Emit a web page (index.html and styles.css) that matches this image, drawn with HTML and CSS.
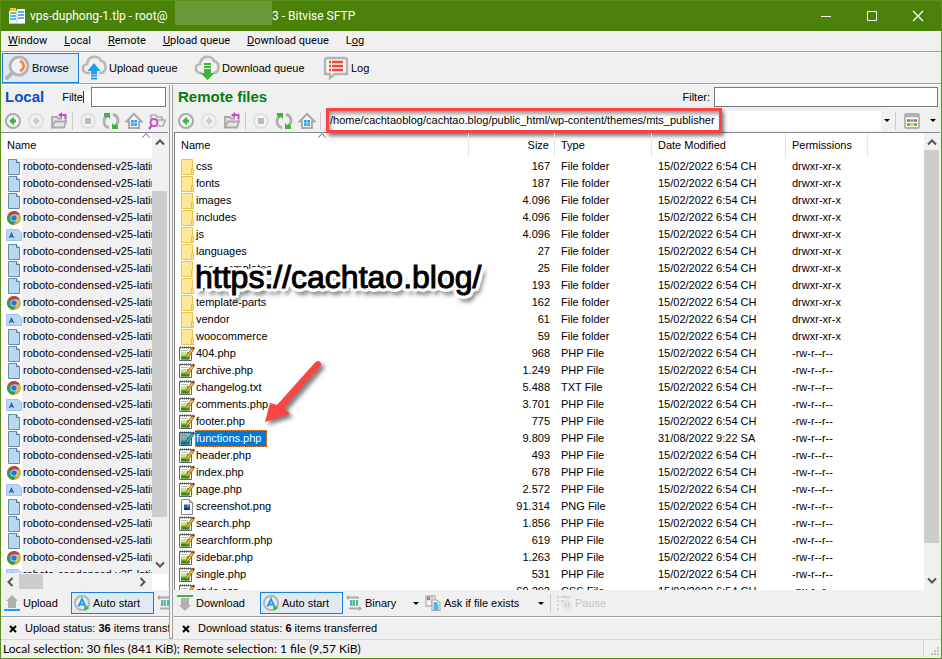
FILE: index.html
```
<!DOCTYPE html>
<html lang="en">
<head>
<meta charset="utf-8">
<title>Bitvise SFTP</title>
<link rel="stylesheet" href="styles.css">
</head>
<body>
<svg class="sprite" aria-hidden="true">
  <symbol id="i-file" viewBox="0 0 16 16"><path d="M2.500.5h8l3 3v12h-11z" fill="#b9d9f3" stroke="#6b8aa6"/><path d="M10.500.5v3h3" fill="#e4f1fb" stroke="#55728c"/></symbol>
  <symbol id="i-chrome" viewBox="0 0 16 16"><circle cx="8" cy="8" r="7" fill="#d8b63c"/><path d="M8 8 1.900 4.500A7 7 0 0 1 14.100 4.500H8z" fill="#b8444c"/><path d="M8 8 1.900 4.500A7 7 0 0 0 7.500 15L11 9.700z" fill="#2f9a5c"/><circle cx="8" cy="8" r="3.600" fill="#dfeaf5"/><circle cx="8" cy="8" r="2.800" fill="#2378dc"/></symbol>
  <symbol id="i-font" viewBox="0 0 16 16"><path d="M.5 2.500h12l3 3v8H.5z" fill="#b9d9f3" stroke="#a3c5e2"/><path d="M3.500 11 5.500 6.500 7.500 11M4.500 9.500h2" fill="none" stroke="#2b55b0" stroke-width="1.200"/></symbol>
  <symbol id="i-folder" viewBox="0 0 16 16"><path d="M2.500.5h11v15h-11z" fill="#ffe796" stroke="#e8c252"/><path d="M12.500 9.500h2v6h-2z" fill="#ffdf80" stroke="#e8c252"/></symbol>
  <symbol id="i-note" viewBox="0 0 16 16"><path d="M.5 1.500h12v13H.5z" fill="#fff" stroke="#666"/><path d="M1 1.500h11" stroke="#555" stroke-width="2" stroke-dasharray="1 1"/><path d="M2 4.500h7" stroke="#bbb"/><path d="M2 6h8.500v7.500H2z" fill="#63b52c"/><path d="M2 11h8.500v2.500H2z" fill="#2f8d20"/><path d="M2 6h6v3.500H2z" fill="#c3e88e"/><path d="M6.500 13 7.500 9.500 13 2l2 1.500L9.500 11z" fill="#f5b52e" stroke="#7a4b14" stroke-width=".7"/><path d="m13 2 1-1.500L16 2l-1 1.500z" fill="#8b1d1d"/></symbol>
  <symbol id="i-img" viewBox="0 0 16 16"><path d="M2.500.5h8l3 3v12h-11z" fill="#fff" stroke="#888"/><path d="M10.500.5v3h3" fill="none" stroke="#888"/><path d="M5 5.500h6v5.500H5z" fill="#1f62b8"/><path d="m5 11 2-3 2 2 1-1 1 2z" fill="#0b3270"/><path d="M8 6.500h2v1H8z" fill="#9fd0ff"/></symbol>
  <symbol id="i-back" viewBox="0 0 18 18"><circle cx="9" cy="9" r="7" fill="#f5f5f5" stroke="#aaa" stroke-width="2"/><path d="M5 9l5-4.500v3h2v3h-2v3z" fill="#3fb63a"/></symbol>
  <symbol id="i-fwd" viewBox="0 0 18 18"><circle cx="9" cy="9" r="7" fill="#f3f3f3" stroke="#e0e0e0" stroke-width="2"/><path d="M13 9 8 4.500v3H6v3h2v3z" fill="#cbcbcb"/></symbol>
  <symbol id="i-open" viewBox="0 0 18 18"><path d="M2 15.500V5h5l1 1.500h4M15.500 8v2M2 15.500h12l2-6H5z" fill="#e4e4e4" stroke="#aaa" stroke-width="1.800"/><path d="M15.500 7.500V3H11" fill="none" stroke="#c84bc8" stroke-width="2"/><path d="M12 0v6L8 3z" fill="#c84bc8"/></symbol>
  <symbol id="i-stop" viewBox="0 0 18 18"><circle cx="9" cy="9" r="7" fill="#f3f3f3" stroke="#e0e0e0" stroke-width="2"/><path d="M6 6h6v6H6z" fill="#bcbcbc"/></symbol>
  <symbol id="i-refresh" viewBox="0 0 18 18"><path d="M11 2.500c6 1 6 8 3 11M7 15.500c-6-1-6-8-3-11" fill="none" stroke="#b0b0b0" stroke-width="2.800"/><path d="M2 1h6v6L6 5 4 6 2 4zM16 17h-6v-6l2 2 2-1 2 2z" fill="#3fb63a"/></symbol>
  <symbol id="i-home" viewBox="0 0 18 18"><path d="M1.500 9.500 9 2l7.500 7.500H14V16H4V9.500z" fill="#f5f5f5" stroke="#aaa" stroke-width="2"/><path d="M6 8h6v6H6z" fill="#2aa4ef"/><path d="M9 8v6M6 11h6" stroke="#9ad8fb"/></symbol>
  <symbol id="i-find" viewBox="0 0 18 18"><path d="M3 8V3h5l1 2h5v3M9 14h6l2.500-6H8" fill="#eee" stroke="#b0b0b0" stroke-width="1.700"/><circle cx="6" cy="10.500" r="3.500" fill="#f3e6f3" stroke="#c84bc8" stroke-width="1.900"/><path d="m4 13-3 4" stroke="#c84bc8" stroke-width="2.200"/></symbol>
  <symbol id="i-auto" viewBox="0 0 16 16"><circle cx="8" cy="8" r="7" fill="#e8edf2" stroke="#b4b4b4" stroke-width="2"/><path d="M4.500 11.500 8 4l3.500 7.500M6 9.500h4" fill="none" stroke="#1d9cf0" stroke-width="1.800"/><path d="m10.500 10 5 3-5 3z" fill="#3fb63a"/></symbol>
  <symbol id="i-bin" viewBox="0 0 16 16"><path d="M1 2.500h12M3 13.500h12" stroke="#aaa" stroke-width="2"/><path d="M0 2.500 3 0v5zM16 13.500 13 11v5z" fill="#aaa"/><path d="M4 6h8M4 8h8M4 10h8" stroke="#1fa3d8" stroke-width="1.500" stroke-dasharray="2 1"/><path d="M6 5v6M11 5v6" stroke="#57bd45"/></symbol>
  <symbol id="i-ask" viewBox="0 0 16 16"><path d="M1 1h6v10H1zM7 1h3v4" fill="#f4f4f4" stroke="#b4b4b4" stroke-width="1.300"/><path d="m2 2 3 3m0-3L2 5" stroke="#e8503e" stroke-width="1.500"/><path d="M7 5h5l3 3v7.500H7z" fill="#fff" stroke="#aaa" stroke-width="1.200"/><path d="M8.500 8h4M8.500 10h5M8.500 12h5M8.500 14h5" stroke="#209de8" stroke-width="1.300"/></symbol>
  <symbol id="i-pause" viewBox="0 0 16 16"><path d="M1 2h2M1 6h2M1 10h2M1 14h2M5 2h9M5 6h3" stroke="#d3d3d3" stroke-width="2"/><circle cx="11" cy="10" r="5" fill="#eee" stroke="#ddd"/><path d="M9.500 7.500v5M12.500 7.500v5" stroke="#c8c8c8" stroke-width="1.600"/></symbol>
  <symbol id="i-up" viewBox="0 0 16 16"><path d="M8 0l6 6h-2v7H4V6H2z" fill="#b0b0b0"/><path d="M0 15h16" stroke="#1b9ff0" stroke-width="2"/></symbol>
  <symbol id="i-down" viewBox="0 0 16 16"><path d="M8 16l6-6h-2V3H4v7H2z" fill="#b0b0b0"/><path d="M0 1h16" stroke="#3fb63a" stroke-width="2"/></symbol>
  <symbol id="i-x" viewBox="0 0 8 8"><path d="m1 1 6 6M7 1 1 7" stroke="#000" stroke-width="2"/></symbol>
  <symbol id="i-chev" viewBox="0 0 10 10"><path d="M1 7.500 5 3.500l4 4" fill="none" stroke="#555" stroke-width="2"/></symbol>
  <symbol id="i-sort" viewBox="0 0 8 5"><path d="m.5 4.500 3.500-4 3.500 4" fill="none" stroke="#666"/></symbol>
</svg>

<div class="window">
  <header class="titlebar">
    <svg class="app-icon" viewBox="0 0 16 16"><path d="M1 0h6v3H1z" fill="#f7c331"/><path d="M0 3h8v12H0zM8 1h8v14H8z" fill="#fff"/><path d="M1 5h6M1 8h6M1 11h6" stroke="#299bdc" stroke-width="1.500"/><path d="M9 4h6M9 7h6M9 10h6" stroke="#299bdc" stroke-width="1.500"/><path d="M0 15.500h16M8 2v13" stroke="#b8c2c8"/></svg>
    <span class="title-start">vps-duphong-1.tlp - root@</span><span class="redacted"></span><span>3 - Bitvise SFTP</span>
    <div class="win-buttons">
      <button aria-label="Minimize"><svg viewBox="0 0 12 12"><path d="M1 6.500h10" stroke="#fff"/></svg></button>
      <button aria-label="Maximize"><svg viewBox="0 0 12 12"><path d="M1.500 1.500h9v9h-9z" fill="none" stroke="#fff"/></svg></button>
      <button aria-label="Close"><svg viewBox="0 0 12 12"><path d="m1 1 10 10M11 1 1 11" stroke="#fff" stroke-width="1.200"/></svg></button>
    </div>
  </header>
  <nav class="menubar">
    <button><u>W</u>indow</button><button><u>L</u>ocal</button><button><u>R</u>emote</button><button><u>U</u>pload queue</button><button><u>D</u>ownload queue</button><button>L<u>o</u>g</button>
  </nav>
  <div class="main-toolbar">
    <button class="tool tool-browse active"><svg viewBox="0 0 26 26"><path d="m10 16-7 7" stroke="#b4b4b4" stroke-width="4" stroke-linecap="round"/><circle cx="15" cy="11" r="9" fill="#eef1f5" stroke="#b4b4b4" stroke-width="3"/><path d="M16 6c5 2 5 8 0 10" fill="none" stroke="#f5842b" stroke-width="2.500"/></svg>Browse</button>
    <button class="tool tool-upload"><svg viewBox="0 0 26 26"><path d="M9 18H6c-5-1-6-8 0-9 1-9 12-9 14-3 6 1 6 11 0 12h-2" fill="none" stroke="#b8b8b8" stroke-width="2.600"/><path d="m13 8 6.500 8H16v3h-6v-3H6.500z" fill="#1d9ff2"/><path d="M10 20.500h6M10 23.500h6" stroke="#1d9ff2" stroke-width="1.800"/></svg>Upload queue</button>
    <button class="tool tool-download"><svg viewBox="0 0 26 26"><path d="M8 18H6c-5-1-6-8 0-9 1-9 12-9 14-3 6 1 6 11 0 12h-1" fill="none" stroke="#b8b8b8" stroke-width="2.600"/><path d="M10 9h7M10 12h7" stroke="#3fb63a" stroke-width="1.800"/><path d="M10 14h7v4h3.500l-7 7-7-7H10z" fill="#3fb63a"/></svg>Download queue</button>
    <button class="tool"><svg viewBox="0 0 26 26"><path d="M4 3h18q2 0 2 2v14H12l-5 4v-4H2V5q0-2 2-2z" fill="#f6f6f6" stroke="#b4b4b4" stroke-width="2.400"/><path d="M6 7h2M6 11h2M6 15h2M9 7h11M9 11h11M9 15h11" stroke="#e84a3c" stroke-width="2.400"/></svg>Log</button>
  </div>

  <main class="panes">
    <section class="pane local">
      <div class="filter-row">
        <h2>Local</h2><label for="lf">Filte</label><span class="patch"></span><input id="lf" type="text">
      </div>
      <div class="nav-row">
        <button aria-label="Back"><svg><use href="#i-back"/></svg></button><button aria-label="Forward"><svg><use href="#i-fwd"/></svg></button><button aria-label="Parent folder"><svg><use href="#i-open"/></svg></button><i class="sep"></i><button aria-label="Stop"><svg><use href="#i-stop"/></svg></button><button aria-label="Refresh"><svg><use href="#i-refresh"/></svg></button><button aria-label="Home"><svg><use href="#i-home"/></svg></button><button aria-label="Find"><svg><use href="#i-find"/></svg></button>
      </div>
      <div class="listbox">
        <div class="list-main">
          <div class="list-clip">
            <table><thead><tr><th>Name<svg class="sort"><use href="#i-sort"/></svg></th></tr></thead><tbody id="local-rows"></tbody></table>
          </div>
          <div class="hscroll"><svg class="left"><use href="#i-chev"/></svg><i class="hthumb"></i><svg class="right"><use href="#i-chev"/></svg></div>
        </div>
        <div class="vscroll"><svg><use href="#i-chev"/></svg><div class="track"><i class="thumb"></i></div><svg class="flip"><use href="#i-chev"/></svg></div>
      </div>
      <div class="action-row">
        <button class="act act-transfer"><svg><use href="#i-up"/></svg>Upload</button><button class="act act-auto active"><svg><use href="#i-auto"/></svg>Auto start</button><button class="act act-binary" aria-label="Binary"><svg><use href="#i-bin"/></svg></button>
      </div>
      <div class="transfer-row"><svg><use href="#i-x"/></svg><span>Upload status: <b>36</b> items transferred</span></div>
    </section>
    <div class="splitter"></div>
    <section class="pane remote">
      <div class="filter-row">
        <h2>Remote files</h2><label for="rf">Filter:</label><input id="rf" type="text">
      </div>
      <div class="nav-row">
        <button aria-label="Back"><svg><use href="#i-back"/></svg></button><button aria-label="Forward"><svg><use href="#i-fwd"/></svg></button><button aria-label="Parent folder"><svg><use href="#i-open"/></svg></button><i class="sep"></i><button aria-label="Stop"><svg><use href="#i-stop"/></svg></button><button aria-label="Refresh"><svg><use href="#i-refresh"/></svg></button><button aria-label="Home"><svg><use href="#i-home"/></svg></button><i class="sep"></i>
        <div class="address"><input type="text" aria-label="Remote path" value="/home/cachtaoblog/cachtao.blog/public_html/wp-content/themes/mts_publisher"><button class="drop" aria-label="Path history"><i class="caret"></i></button><span class="mark-box"></span></div>
        <i class="sep"></i>
        <button class="view" aria-label="View"><svg viewBox="0 0 18 18"><rect x="2" y="2" width="14" height="14" rx="1" fill="#fafafa" stroke="#b0b0b0" stroke-width="1.800"/><path d="M2 4h14" stroke="#b0b0b0" stroke-width="2.500"/><g stroke-width="2.500"><path d="M4 8.500h3" stroke="#e84a3c"/><path d="M7.500 8.500h3" stroke="#209de8"/><path d="M11 8.500h3" stroke="#e84a3c"/><path d="M4 12.500h3" stroke="#3fb63a"/><path d="M7.500 12.500h3" stroke="#f2b21d"/><path d="M11 12.500h3" stroke="#3fb63a"/></g></svg></button><button class="view-drop" aria-label="View options"><i class="caret"></i></button>
      </div>
      <div class="listbox">
        <div class="list-main"><div class="list-clip">
          <table>
            <colgroup><col class="c-name"><col class="c-size"><col class="c-type"><col class="c-date"><col class="c-perm"><col></colgroup>
            <thead><tr><th>Name<svg class="sort"><use href="#i-sort"/></svg></th><th class="num">Size</th><th>Type</th><th>Date Modified</th><th>Permissions</th><th></th></tr></thead>
            <tbody id="remote-rows"></tbody>
          </table>
          <svg class="arrow" viewBox="0 0 64 74"><path d="M53.500 5 Q58 2 59.500 8 L22 51 L28 57 L3 65 L8 46 L15 48z" fill="#fa4545"/></svg>
          <div class="watermark">https://cachtao.blog/</div>
        </div></div>
        <div class="vscroll"><svg><use href="#i-chev"/></svg><div class="track"><i class="thumb"></i></div><svg class="flip"><use href="#i-chev"/></svg></div>
      </div>
      <div class="action-row">
        <button class="act act-transfer"><svg><use href="#i-down"/></svg>Download</button><button class="act act-auto active"><svg><use href="#i-auto"/></svg>Auto start</button><button class="act act-binary"><svg><use href="#i-bin"/></svg>Binary<i class="caret"></i></button><button class="act act-ask"><svg><use href="#i-ask"/></svg>Ask if file exists<i class="caret"></i></button><i class="sep"></i><button class="act" disabled><svg><use href="#i-pause"/></svg>Pause</button>
      </div>
      <div class="transfer-row"><svg><use href="#i-x"/></svg><span>Download status: <b>6</b> items transferred</span></div>
    </section>
  </main>
  <footer class="statusbar"><span>Local selection: 30 files (841 KiB); Remote selection: 1 file (9,57 KiB)</span>
    <svg class="grip" viewBox="0 0 12 12"><path d="M8 1h2v2H8zM5 4h2v2H5zM8 4h2v2H8zM2 7h2v2H2zM5 7h2v2H5zM8 7h2v2H8z" fill="#bfbfbf"/></svg></footer>
</div>
<script src="app.js"></script>
</body>
</html>
```
FILE: styles.css
```
* { box-sizing: border-box; }
body { margin: 0; font: 11px/17px "Liberation Sans", Arial, sans-serif; color: #000; background: #f0f0f0; }
button { font: inherit; color: inherit; background: none; border: 0; padding: 0; margin: 0; white-space: nowrap; text-align: left; }
input { font: inherit; border: 1px solid #7a7a7a; background: #fff; padding: 0 2px; min-width: 0; border-radius: 0; }
svg { display: block; flex: none; }
.sprite { position: absolute; width: 0; height: 0; }
.window { height: 100vh; min-height: 400px; display: flex; flex-direction: column; border: 1px solid #5a9018; overflow: hidden; }

.titlebar { display: flex; align-items: center; flex: none; height: 30px; padding-left: 8px; background: #4a8209; color: #fff; font: 12px/18px Roboto, sans-serif; white-space: pre; }
.app-icon { width: 16px; height: 16px; margin-right: 5px; }
.title-start { width: 145px; }
.redacted { width: 97px; height: 24px; background: #699a38; align-self: flex-start; }
.win-buttons { display: flex; margin-left: auto; }
.win-buttons button { width: 46px; height: 28px; display: grid; place-items: center; }
.win-buttons svg { width: 12px; height: 12px; }

.menubar { display: flex; align-items: center; flex: none; height: 21px; gap: 17px; padding-left: 7px; border-bottom: 1px solid #a0a0a0; font: 11px/18px Roboto, sans-serif; }
.main-toolbar { display: flex; flex: none; height: 32px; border-top: 1px solid #fff; border-bottom: 1px solid #a0a0a0; padding-left: 1px; }
.tool { display: flex; align-items: center; gap: 2px; padding: 0 1px; border: 1px solid transparent; }
.tool svg { width: 26px; height: 26px; }
.active { background: #e1e9f2; border: 1px solid #1a7fdc; }
.tool-browse { width: 77px; }
.tool-upload { width: 113px; }
.tool-download { width: 129px; }

.panes { flex: 1; min-height: 0; display: flex; border-top: 1px solid #fff; }
.pane { display: flex; flex-direction: column; min-width: 0; overflow: hidden; }
.local { width: 168px; flex: none; }
.remote { flex: 1; }
.splitter { flex: none; width: 4px; margin-right: 1px; border: 1px solid #a0a0a0; border-top: 0; background: #f4f4f4; }
.filter-row { display: flex; align-items: center; flex: none; height: 24px; padding: 0 3px 0 4px; }
.filter-row h2 { margin: 0; font: bold 15px/20px "Liberation Sans", Arial, sans-serif; color: #0a4ec8; }
.remote .filter-row h2 { color: #077a14; flex: 1; }
.filter-row input { height: 20px; }
.local label { margin-left: 18px; }
.local .filter-row input { flex: 1; }
.patch { width: 8px; height: 12px; border-left: 1px solid #333; background: #fff; }
.remote .filter-row input { width: 224px; margin-left: 4px; }

.nav-row { display: flex; align-items: center; flex: none; height: 23px; }
.nav-row > button { width: 23px; height: 22px; display: grid; place-items: center; flex: none; }
.nav-row svg { width: 18px; height: 18px; }
.sep { flex: none; width: 1px; height: 18px; margin: 0 3px 0 2px; background: #cfc8c8; }
.address { flex: 1; display: flex; height: 20px; margin-left: 2px; background: #fff; position: relative; }
.address input { flex: 1; border: 0; background: none; padding: 0 2px 0 4px; }
.drop { width: 12px; display: grid; place-items: center; background: #f0f0f0; }
.mark-box { position: absolute; left: 0; top: -3px; width: 396px; height: 25px; border: 3px solid #fa4545; box-shadow: 2px 3px 4px #0008, inset 2px 3px 4px #0006; pointer-events: none; }
.caret { display: block; width: 0; height: 0; border: 3px solid transparent; border-top-color: #000; border-bottom: 0; }
.nav-row .view { width: 26px; }
.nav-row .view-drop { width: 16px; }

.listbox { flex: 1; min-height: 0; display: flex; border-top: 1px solid #828790; background: #fff; }
.remote .listbox { border-left: 1px solid #828790; margin-right: 1px; }
.local .listbox { margin-right: 1px; }
.list-main { flex: 1; min-width: 0; display: flex; flex-direction: column; }
.list-clip { flex: 1; min-height: 0; overflow: hidden; position: relative; }
table { width: 100%; border-collapse: separate; border-spacing: 0; table-layout: fixed; }
th { height: 25px; padding: 0 6px; font-weight: normal; text-align: left; border-right: 1px solid #e5e5e5; position: relative; }
th:last-child { border-right: 0; }
td { height: 17px; padding: 0 6px; white-space: nowrap; overflow: hidden; }
.sort { position: absolute; top: 0; left: 50%; width: 8px; height: 5px; margin-left: -4px; }
.local .sort { left: auto; right: 2px; }
.num { text-align: right; padding-right: 5px; }
.c-name { width: 294px; }
.c-size { width: 86px; }
.c-type { width: 97px; }
.c-date { width: 134px; }
.c-perm { width: 82px; }
td:first-child { padding: 0 0 0 4px; }
.entry { display: flex; align-items: center; height: 17px; }
.entry svg { width: 16px; height: 16px; }
.entry span { padding: 0 6px 0 1px; }
.local .entry span { flex: 1; background: #f0f0f0; }
.local td:first-child { padding-left: 5px; }
.selected span { background: #0078d7; color: #fff; outline: 1px dotted #e88b3a; outline-offset: -1px; height: 17px; }
.selected svg { filter: sepia(1) hue-rotate(150deg) saturate(3) brightness(0.7); }

.vscroll { flex: none; width: 16px; background: #f0f0f0; display: flex; flex-direction: column; align-items: center; padding: 4px 0; }
.local .vscroll { margin-bottom: 16px; }
.vscroll svg { width: 10px; height: 10px; }
.flip { transform: rotate(180deg); }
.track { flex: 1; align-self: stretch; display: flex; flex-direction: column; padding: 3px 1px 3px 0; }
.thumb { background: #cdcdcd; height: 93%; }
.local .track { padding-top: 44px; }
.local .thumb { height: 89%; }
.hscroll { height: 17px; flex: none; display: flex; align-items: center; background: #f0f0f0; padding: 0 4px; }
.hscroll svg { width: 10px; height: 10px; }
.left { transform: rotate(-90deg); }
.right { transform: rotate(90deg); margin-left: auto; }
.hthumb { width: 24px; height: 15px; margin-left: 4px; background: #cdcdcd; }

.action-row { display: flex; align-items: center; flex: none; height: 27px; border-bottom: 1px solid #a0a0a0; overflow: hidden; }
.act { display: flex; align-items: center; flex: none; gap: 3px; height: 22px; padding: 0 2px; border: 1px solid transparent; }
.act.active { border-color: #1a7fdc; }
.act svg { width: 16px; height: 16px; }
.act .caret { margin-left: auto; }
.act:disabled { color: #c3c3c3; }
.act-transfer { width: 70px; }
.act-auto { width: 83px; }
.remote .act-transfer { width: 86px; }
.remote .act-binary { width: 79px; }
.act-ask { width: 125px; }
.action-row .sep { margin: 0 2px 0 3px; }
.transfer-row { display: flex; align-items: center; flex: none; height: 22px; gap: 8px; padding-left: 8px; border-top: 1px solid #fff; white-space: nowrap; overflow: hidden; }
.transfer-row svg { width: 8px; height: 8px; }
.statusbar { display: flex; align-items: center; justify-content: space-between; flex: none; height: 19px; padding-left: 2px; border-top: 1px solid #d7d7d7; font: 12px/18px Lato, sans-serif; }
.grip { order: 2; width: 12px; height: 12px; align-self: flex-end; }
.statusbar::before { content: ""; order: 1; width: 1px; height: 16px; background: #d0d0d0; margin-left: auto; margin-right: 5px; }

.watermark { position: absolute; left: 20px; top: 126px; font: 32px/36px "Liberation Sans", Arial, sans-serif; color: #000; white-space: nowrap; -webkit-text-stroke: 1px #000; text-shadow: 2px 0 #fff, -2px 0 #fff, 0 2px #fff, 0 -2px #fff, 3px 3px #fff, -3px -3px #fff, 3px -3px #fff, -3px 3px #fff, 4px 0 #fff, -4px 0 #fff, 0 4px #fff, 0 -4px #fff, 3px 6px 5px #000; }
.arrow { position: absolute; left: 87px; top: 224px; width: 64px; height: 74px; filter: drop-shadow(3px 3px 2px #0008); }
```
FILE: app.js
```
const icon = (name) => `<svg><use href="#i-${name}"/></svg>`;

// Local list: the same font family in several formats.
const kinds = ['file', 'file', 'file', 'chrome', 'font'];
document.getElementById('local-rows').innerHTML = Array.from({ length: 25 }, (_, i) =>
  `<tr><td><div class="entry">${icon(kinds[i % 5])}<span>roboto-condensed-v25-latin</span></div></td></tr>`).join('');

// Remote list: name, size, and the fields that differ from the usual ones.
const files = [
  ['css', '167'], ['fonts', '187'], ['images', '4.096'], ['includes', '4.096'], ['js', '4.096'],
  ['languages', '27'], ['page-templates', '25'], ['options', '193'], ['template-parts', '162'],
  ['vendor', '61'], ['woocommerce', '59'], ['404.php', '968'], ['archive.php', '1.249'],
  ['changelog.txt', '5.488'], ['comments.php', '3.701'], ['footer.php', '775'],
  ['functions.php', '9.809'], ['header.php', '493'], ['index.php', '678'], ['page.php', '2.572'],
  ['screenshot.png', '91.314'], ['search.php', '1.856'], ['searchform.php', '619'],
  ['sidebar.php', '1.263'], ['single.php', '531'], ['style.css', '69.292'],
];
document.getElementById('remote-rows').innerHTML = files.map(([name, size]) => {
  const ext = name.split('.')[1];
  const type = ext ? `${ext.toUpperCase()} File` : 'File folder';
  const pic = !ext ? 'folder' : ext === 'png' ? 'img' : 'note';
  const chosen = name === 'functions.php';
  const date = chosen ? '31/08/2022 9:22 SA' : '15/02/2022 6:54 CH';
  return `<tr><td><div class="entry${chosen ? ' selected' : ''}">${icon(pic)}<span>${name}</span></div></td>` +
    `<td class="num">${size}</td><td>${type}</td><td>${date}</td><td>${ext ? '-rw-r--r--' : 'drwxr-xr-x'}</td><td></td></tr>`;
}).join('');
```
